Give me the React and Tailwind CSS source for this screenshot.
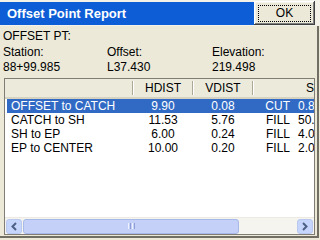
import React from "react";

const rows = [
  ["OFFSET to CATCH", "9.90", "0.08", "CUT", "0.80"],
  ["CATCH to SH", "11.53", "5.76", "FILL", "50.00"],
  ["SH to EP", "6.00", "0.24", "FILL", "4.00"],
  ["EP to CENTER", "10.00", "0.20", "FILL", "2.00"],
];

function Sep() {
  return (
    <div className="flex h-full shrink-0 items-center">
      <div className="h-[14px] w-px bg-[#aca899]" />
      <div className="h-[14px] w-px bg-white" />
    </div>
  );
}

function Chevron({ dir }) {
  return (
    <svg width="8" height="9" viewBox="0 0 8 9">
      {dir === "left" ? (
        <polyline points="6,1 2.5,4.5 6,8" fill="none" stroke="#4d6185" strokeWidth="2" />
      ) : (
        <polyline points="2,1 5.5,4.5 2,8" fill="none" stroke="#4d6185" strokeWidth="2" />
      )}
    </svg>
  );
}

export default function App() {
  return (
    <div
      className="w-[320px] h-[240px] bg-[#ece9d8] overflow-hidden text-black"
      style={{ fontFamily: '"Liberation Sans", Arial, sans-serif' }}
    >
      {/* title row */}
      <div className="flex h-[26px] items-start bg-[#f3f1e8]">
        <div className="mt-[2px] flex h-[23px] w-[254px] shrink-0 items-center bg-[#0c5dd6] pl-[7px] pt-[1px] text-[13px] font-bold text-white">
          Offset Point Report
        </div>
        <div className="mt-[1px] flex h-[24px] w-[61px] shrink-0 items-center justify-center bg-[#ece9d8] shadow-[inset_-1px_-1px_0_#404040,inset_1px_1px_0_#ffffff,inset_-2px_-2px_0_#808080,inset_2px_2px_0_#f5f4ec]">
          <div className="flex h-[17px] w-[53px] items-center justify-center border border-dotted border-black text-[12px]">
            OK
          </div>
        </div>
      </div>

      {/* body */}
      <div className="flex h-[212px] w-[319px] flex-col border-b-2 border-r-2 border-[#716f64] pt-[3px] text-[12px]">
        <div className="h-[16px] pl-[3px] leading-[14px]">OFFSET PT:</div>
        <div className="grid h-[15px] grid-cols-[104px_105px_1fr] pl-[3px] leading-[14px]">
          <span>Station:</span>
          <span>Offset:</span>
          <span>Elevation:</span>
        </div>
        <div className="grid h-[15px] grid-cols-[104px_105px_1fr] pl-[3px] leading-[14px]">
          <span>88+99.985</span>
          <span>L37.430</span>
          <span>219.498</span>
        </div>

        {/* list view */}
        <div className="ml-[4px] mt-[3px] flex h-[157px] w-[311px] flex-col overflow-hidden border border-[#7f7d75] bg-white">
          {/* header */}
          <div className="flex h-[20px] shrink-0 items-stretch whitespace-nowrap border-b-2 border-[#d6d2c2] bg-[#ebeadb]">
            <div className="w-[127px] shrink-0" />
            <Sep />
            <div className="flex w-[58px] shrink-0 items-center justify-center">HDIST</div>
            <Sep />
            <div className="flex w-[58px] shrink-0 items-center justify-center">VDIST</div>
            <Sep />
            <div className="flex shrink-0 items-center pl-[52px]">SLOPE</div>
          </div>

          {/* rows */}
          <div className="flex flex-col pl-[2px]">
            {rows.map((r, i) => (
              <div
                key={i}
                className={
                  "flex h-[14px] items-center whitespace-nowrap leading-[14px] " +
                  (i === 0 ? "bg-[#316ac5] text-white" : "")
                }
              >
                <div className="w-[126px] shrink-0 pl-[4px]">{r[0]}</div>
                <div className="w-[60px] shrink-0 text-center">{r[1]}</div>
                <div className="w-[60px] shrink-0 text-center">{r[2]}</div>
                <div className="w-[37px] shrink-0 text-right">{r[3]}</div>
                <div className="shrink-0 pl-[8px]">{r[4]}</div>
              </div>
            ))}
          </div>

          <div className="flex-1" />

          {/* horizontal scrollbar */}
          <div className="flex h-[17px] shrink-0 items-center border-t border-[#eceae2] bg-[#f5f4ef]">
            <div className="ml-[1px] flex h-[15px] w-[16px] shrink-0 items-center justify-center rounded-[3px] border border-[#b9c8ef] bg-[#c6d5fc]">
              <Chevron dir="left" />
            </div>
            <div className="ml-[1px] flex h-[15px] w-[216px] shrink-0 items-center justify-center rounded-[3px] border border-[#a7b9e8] bg-[#c4d0f7]">
              <div className="flex gap-[1px]">
                <div className="h-[6px] w-px bg-[#eef2fe]" />
                <div className="h-[6px] w-px bg-[#8d9fd6]" />
                <div className="h-[6px] w-px bg-[#eef2fe]" />
                <div className="h-[6px] w-px bg-[#8d9fd6]" />
              </div>
            </div>
            <div className="flex-1" />
            <div className="mr-[1px] flex h-[15px] w-[16px] shrink-0 items-center justify-center rounded-[3px] border border-[#b9c8ef] bg-[#c6d5fc]">
              <Chevron dir="right" />
            </div>
          </div>
        </div>
      </div>
    </div>
  );
}
